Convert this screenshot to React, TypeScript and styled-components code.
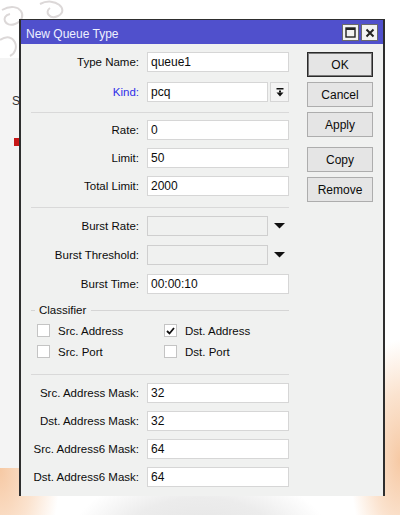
import React from 'react';
import styled, { createGlobalStyle } from 'styled-components';

const Global = createGlobalStyle`
  html, body { margin: 0; padding: 0; }
  body {
    width: 400px;
    height: 515px;
    overflow: hidden;
    background: #ffffff;
    font-family: "Liberation Sans", Arial, sans-serif;
  }
`;

const Desktop = styled.div`
  position: relative;
  width: 400px;
  height: 515px;
  overflow: hidden;
  box-sizing: border-box;
  padding: 19px 0 0 19px;
  background:
    radial-gradient(ellipse 130px 70px at 200px 540px, #e4e4e4 0%, #ececec 60%, rgba(255,255,255,0) 100%),
    radial-gradient(ellipse 60px 120px at 0px 470px, #f6c9a4 0%, #fbe3cf 55%, rgba(255,255,255,0) 100%),
    radial-gradient(ellipse 50px 120px at 400px 460px, #f6c9a4 0%, #fbe3cf 55%, rgba(255,255,255,0) 100%),
    #ffffff;
`;

const Swirls = styled.svg`
  position: absolute;
  left: 0;
  top: 0;
  width: 80px;
  height: 200px;
`;

const BehindWindow = styled.div`
  position: absolute;
  left: 0;
  top: 58px;
  width: 19px;
  height: 410px;
  background: #f4f4f4;
  border-right: 1px solid #d0d0d0;
  font-size: 12px;
  color: #333;
`;

const BehindGlyph = styled.span<{ $top: number }>`
  position: absolute;
  left: 12px;
  top: ${(p) => p.$top}px;
`;

const RedMark = styled.span`
  position: absolute;
  left: 14px;
  top: 80px;
  width: 5px;
  height: 8px;
  background: #c81818;
`;

const Window = styled.div`
  position: relative;
  z-index: 1;
  width: 366px;
  box-sizing: border-box;
  border-style: solid;
  border-color: #2e2e2e;
  border-width: 1px 2px 0 2px;
  background: #f0f1f0;
`;

const TitleBar = styled.div`
  height: 24px;
  background: #5050cc;
  display: flex;
  align-items: center;
  padding: 0 5px 0 5px;
`;

const Title = styled.div`
  flex: 1;
  color: #eef0ff;
  font-size: 12px;
  padding-top: 3px;
`;

const TitleButtons = styled.div`
  display: flex;
  gap: 2px;
  padding-top: 1px;
`;

const TitleButton = styled.div`
  width: 17px;
  height: 17px;
  box-sizing: border-box;
  background: #f2f2f2;
  border: 1px solid #6a6a6a;
  display: flex;
  align-items: center;
  justify-content: center;
`;

const Body = styled.div`
  display: flex;
  padding: 8px 10px 9px 10px;
`;

const Form = styled.div`
  width: 258px;
  display: flex;
  flex-direction: column;
`;

const Section = styled.div<{ $gap: number }>`
  display: flex;
  flex-direction: column;
  gap: ${(p) => p.$gap}px;
`;

const Row = styled.div`
  display: grid;
  grid-template-columns: 108px 142px;
  column-gap: 8px;
  height: 20px;
  align-items: center;
`;

const Label = styled.div<{ $link?: boolean }>`
  text-align: right;
  font-size: 11.5px;
  color: ${(p) => (p.$link ? '#2f2fe8' : '#0c0c0c')};
  white-space: nowrap;
`;

const Field = styled.div`
  display: flex;
  align-items: center;
  gap: 2px;
  height: 20px;
`;

const Input = styled.div<{ $disabled?: boolean; $short?: boolean }>`
  width: ${(p) => (p.$short ? '121px' : '142px')};
  height: 20px;
  box-sizing: border-box;
  border: 1px solid ${(p) => (p.$disabled ? '#cfcfcf' : '#d6d6d6')};
  background: ${(p) => (p.$disabled ? '#f0f1f0' : '#ffffff')};
  font-size: 12px;
  color: #0c0c0c;
  padding: 0 3px;
  line-height: 18px;
`;

const DropButton = styled.div`
  width: 19px;
  height: 20px;
  box-sizing: border-box;
  border: 1px solid #d6d6d6;
  background: #f4f4f4;
  display: flex;
  align-items: center;
  justify-content: center;
`;

const DropArrow = styled.div`
  width: 19px;
  height: 20px;
  display: flex;
  align-items: center;
  justify-content: center;
`;

const Separator = styled.div<{ $top: number; $bottom: number }>`
  height: 1px;
  background: #d9d9d9;
  margin: ${(p) => p.$top}px 0 ${(p) => p.$bottom}px 0;
`;

const GroupHeader = styled.div`
  display: flex;
  align-items: center;
  height: 14px;
  margin-top: 9px;
  &::before {
    content: '';
    width: 4px;
    height: 1px;
    background: #d5d5d5;
  }
  &::after {
    content: '';
    flex: 1;
    height: 1px;
    background: #d5d5d5;
  }
`;

const GroupTitle = styled.span`
  padding: 0 5px 0 4px;
  font-size: 11.5px;
  color: #0c0c0c;
`;

const CheckGrid = styled.div`
  display: grid;
  grid-template-columns: 127px 1fr;
  row-gap: 8px;
  padding-left: 6px;
  margin-top: 7px;
`;

const CheckItem = styled.div`
  display: flex;
  align-items: center;
  gap: 8px;
  height: 13px;
  font-size: 11.5px;
  color: #0c0c0c;
`;

const Box = styled.div`
  width: 13px;
  height: 13px;
  box-sizing: border-box;
  border: 1px solid #c4c4c4;
  background: #ffffff;
  display: flex;
  align-items: center;
  justify-content: center;
`;

const Buttons = styled.div`
  width: 66px;
  margin-left: 18px;
  display: flex;
  flex-direction: column;
  gap: 5px;
`;

const Button = styled.div<{ $default?: boolean; $spaced?: boolean }>`
  height: 25px;
  box-sizing: border-box;
  border: 1px solid ${(p) => (p.$default ? '#2a2a2a' : '#adadad')};
  box-shadow: ${(p) => (p.$default ? 'inset 0 0 0 1px #7a7a7a' : 'none')};
  background: #e5e5e5;
  display: flex;
  align-items: center;
  justify-content: center;
  font-size: 12px;
  color: #0c0c0c;
  margin-top: ${(p) => (p.$spaced ? '5px' : '0')};
`;

const Check = ({ label, checked }: { label: string; checked?: boolean }) => (
  <CheckItem>
    <Box>
      {checked && (
        <svg width="9" height="8" viewBox="0 0 9 8">
          <path d="M1 4 L3.5 6.5 L8 1" stroke="#111" strokeWidth="1.8" fill="none" />
        </svg>
      )}
    </Box>
    {label}
  </CheckItem>
);

const TextRow = ({ label, value, link }: { label: string; value: string; link?: boolean }) => (
  <Row>
    <Label $link={link}>{label}</Label>
    <Input>{value}</Input>
  </Row>
);

const ComboRow = ({ label }: { label: string }) => (
  <Row>
    <Label>{label}</Label>
    <Field>
      <Input $short $disabled />
      <DropArrow>
        <svg width="11" height="6" viewBox="0 0 11 6">
          <path d="M0 0 H11 L5.5 5.5 Z" fill="#111" />
        </svg>
      </DropArrow>
    </Field>
  </Row>
);

export default function App() {
  return (
    <>
      <Global />
      <Desktop>
        <Swirls viewBox="0 0 80 200">
          <g fill="none" stroke="#dcd8d8" strokeWidth="2">
            <path d="M2 10 C20 0 30 18 15 24 C5 28 0 16 10 14" />
            <path d="M40 4 C55 -4 70 10 58 16 C50 20 44 12 50 8" />
            <path d="M0 40 C14 30 22 50 10 56" />
            <path d="M0 150 C10 140 20 156 10 164 C4 168 0 160 6 156" />
            <path d="M0 90 C8 80 18 96 8 104" />
          </g>
        </Swirls>
        <BehindWindow>
          <BehindGlyph $top={36}>S</BehindGlyph>
          <RedMark />
        </BehindWindow>
        <Window>
          <TitleBar>
            <Title>New Queue Type</Title>
            <TitleButtons>
              <TitleButton>
                <svg width="11" height="11" viewBox="0 0 11 11">
                  <rect x="1" y="1" width="9" height="9" fill="none" stroke="#222" strokeWidth="1.4" />
                  <rect x="1" y="1" width="9" height="2" fill="#222" />
                </svg>
              </TitleButton>
              <TitleButton>
                <svg width="10" height="10" viewBox="0 0 10 10">
                  <path d="M1.5 1.5 L8.5 8.5 M8.5 1.5 L1.5 8.5" stroke="#222" strokeWidth="2" />
                </svg>
              </TitleButton>
            </TitleButtons>
          </TitleBar>
          <Body>
            <Form>
              <Section $gap={10}>
                <TextRow label="Type Name:" value="queue1" />
                <Row>
                  <Label $link>Kind:</Label>
                  <Field>
                    <Input $short>pcq</Input>
                    <DropButton>
                      <svg width="8" height="9" viewBox="0 0 8 9">
                        <rect x="0.5" y="0" width="7" height="1.5" fill="#111" />
                        <rect x="3" y="2.5" width="2" height="2" fill="#111" />
                        <path d="M0.5 4.5 H7.5 L4 8.5 Z" fill="#111" />
                      </svg>
                    </DropButton>
                  </Field>
                </Row>
              </Section>
              <Separator $top={10} $bottom={7} />
              <Section $gap={8}>
                <TextRow label="Rate:" value="0" />
                <TextRow label="Limit:" value="50" />
                <TextRow label="Total Limit:" value="2000" />
              </Section>
              <Separator $top={11} $bottom={8} />
              <Section $gap={9}>
                <ComboRow label="Burst Rate:" />
                <ComboRow label="Burst Threshold:" />
                <TextRow label="Burst Time:" value="00:00:10" />
              </Section>
              <GroupHeader>
                <GroupTitle>Classifier</GroupTitle>
              </GroupHeader>
              <CheckGrid>
                <Check label="Src. Address" />
                <Check label="Dst. Address" checked />
                <Check label="Src. Port" />
                <Check label="Dst. Port" />
              </CheckGrid>
              <Separator $top={16} $bottom={8} />
              <Section $gap={8}>
                <TextRow label="Src. Address Mask:" value="32" />
                <TextRow label="Dst. Address Mask:" value="32" />
                <TextRow label="Src. Address6 Mask:" value="64" />
                <TextRow label="Dst. Address6 Mask:" value="64" />
              </Section>
            </Form>
            <Buttons>
              <Button $default>OK</Button>
              <Button>Cancel</Button>
              <Button>Apply</Button>
              <Button $spaced>Copy</Button>
              <Button>Remove</Button>
            </Buttons>
          </Body>
        </Window>
      </Desktop>
    </>
  );
}
